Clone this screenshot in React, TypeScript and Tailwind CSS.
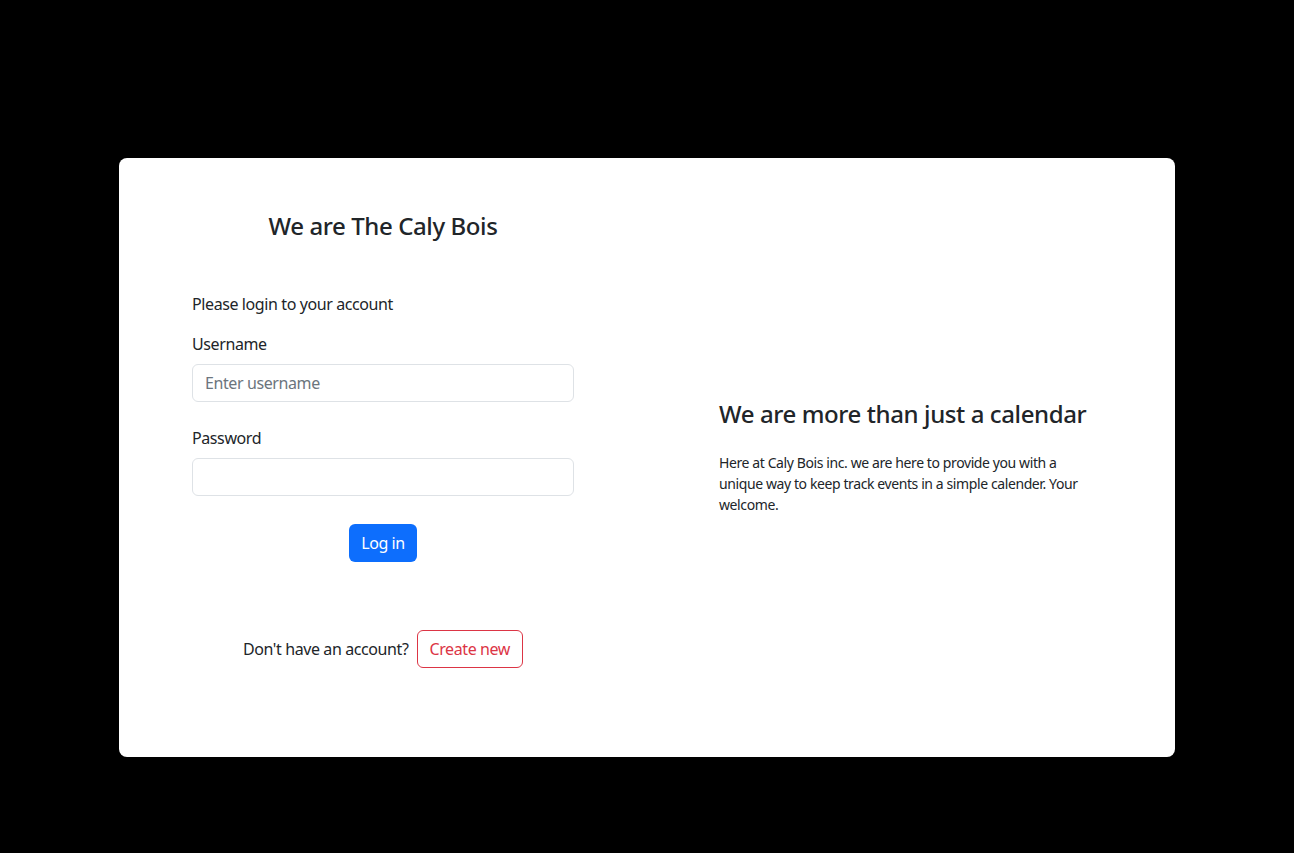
export default function App() {
  return (
    <div className="min-h-[853px] bg-black pt-[158px] tracking-tight text-[#212529] font-['Noto_Sans',sans-serif]">
      <div className="mx-auto flex h-[599px] w-[1056px] rounded-lg bg-white">
        {/* login column */}
        <div className="w-1/2 px-[73px] pt-[50px]">
          <h4 className="mt-1 mb-[51px] text-center text-[24px] font-medium leading-[1.2]">
            We are The Caly Bois
          </h4>

          <p className="mb-4 text-base leading-6">Please login to your account</p>

          <div className="mb-6">
            <label className="mb-2 block text-base leading-6">Username</label>
            <input
              type="text"
              placeholder="Enter username"
              className="block h-[38px] w-full rounded-md border border-[#dee2e6] px-3 text-base text-[#212529] placeholder:text-[#6c757d] outline-none"
            />
          </div>

          <div className="mb-6">
            <label className="mb-2 block text-base leading-6">Password</label>
            <input
              type="password"
              className="block h-[38px] w-full rounded-md border border-[#dee2e6] px-3 text-base outline-none"
            />
          </div>

          <div className="pt-1 text-center">
            <button className="h-[38px] rounded-md bg-[#0d6efd] px-3 text-base leading-6 text-white">
              Log in
            </button>
          </div>

          <div className="mt-[68px] flex items-center justify-center">
            <p className="mr-2 text-base leading-6">Don't have an account?</p>
            <button className="h-[38px] rounded-md border border-[#dc3545] px-3 text-base leading-6 text-[#dc3545]">
              Create new
            </button>
          </div>
        </div>

        {/* info column */}
        <div className="flex w-1/2 items-center px-[72px]">
          <div>
            <h4 className="mb-6 text-[24px] font-medium leading-[1.2]">We are more than just a calendar</h4>
            <p className="text-sm leading-[21px]">
              Here at Caly Bois inc. we are here to provide you with a unique way to keep track events in a simple
              calender. Your welcome.
            </p>
          </div>
        </div>
      </div>
    </div>
  );
}
